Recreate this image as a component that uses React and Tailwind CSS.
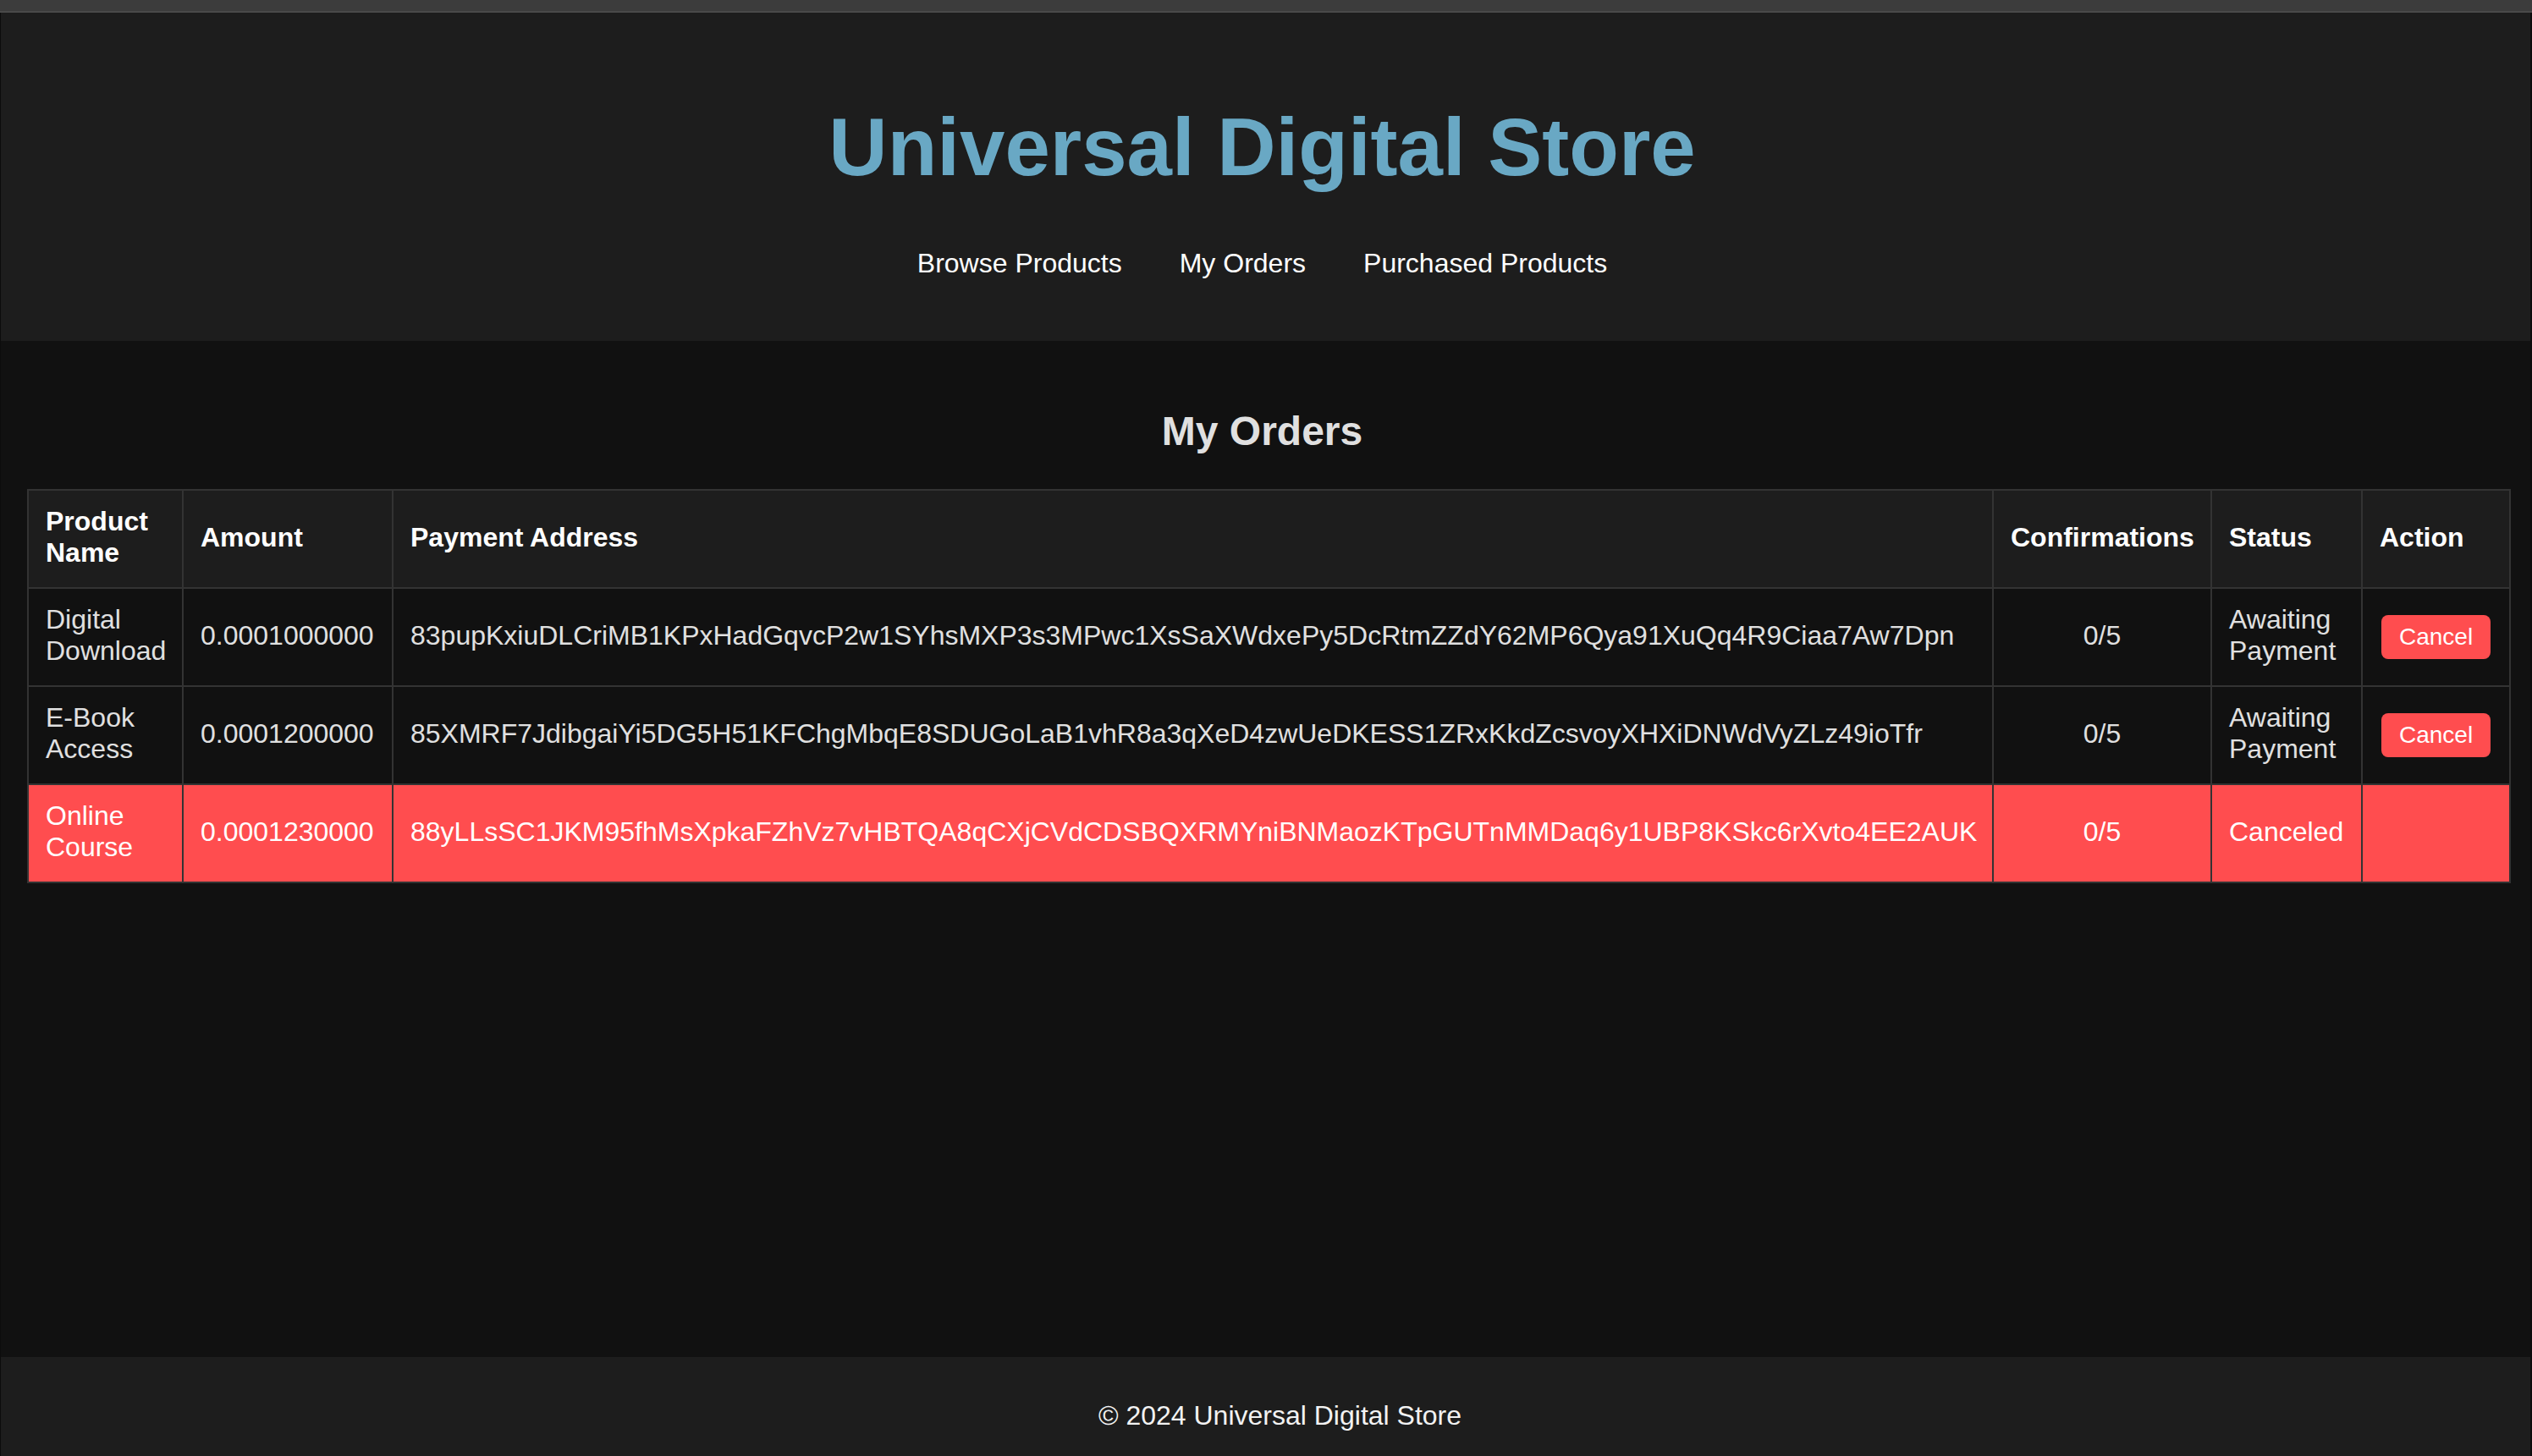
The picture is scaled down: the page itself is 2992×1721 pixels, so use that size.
import React from "react";

const orders = [
  {
    name: ["Digital", "Download"],
    amount: "0.0001000000",
    address:
      "83pupKxiuDLCriMB1KPxHadGqvcP2w1SYhsMXP3s3MPwc1XsSaXWdxePy5DcRtmZZdY62MP6Qya91XuQq4R9Ciaa7Aw7Dpn",
    conf: "0/5",
    status: ["Awaiting", "Payment"],
    canceled: false,
  },
  {
    name: ["E-Book", "Access"],
    amount: "0.0001200000",
    address:
      "85XMRF7JdibgaiYi5DG5H51KFChgMbqE8SDUGoLaB1vhR8a3qXeD4zwUeDKESS1ZRxKkdZcsvoyXHXiDNWdVyZLz49ioTfr",
    conf: "0/5",
    status: ["Awaiting", "Payment"],
    canceled: false,
  },
  {
    name: ["Online", "Course"],
    amount: "0.0001230000",
    address:
      "88yLLsSC1JKM95fhMsXpkaFZhVz7vHBTQA8qCXjCVdCDSBQXRMYniBNMaozKTpGUTnMMDaq6y1UBP8KSkc6rXvto4EE2AUK",
    conf: "0/5",
    status: ["Canceled"],
    canceled: true,
  },
];

const cell = "border-2 border-[#333333] px-[20px] pt-[18px] pb-[22px] align-middle";

export default function App() {
  return (
    <div className="font-['Liberation_Sans',Arial,sans-serif] bg-[#111111] min-h-[1721px]">
      <div className="h-[13px] bg-[#3c3c3c]" />
      <div className="h-[2px] bg-[#4a4a4a]" />
      <div className="border-l-[1px] border-r-[2px] border-[#0c0c0c]">
        <header className="h-[388px] bg-[#1d1d1d] flex flex-col items-center pt-[104px] pr-[8px]">
          <h1 className="text-[96px] leading-[110px] font-bold text-[#69a8c4] whitespace-nowrap">
            Universal Digital Store
          </h1>
          <nav className="mt-[64px] flex gap-[68px] text-[32px] leading-[37px] text-white whitespace-nowrap">
            <a>Browse Products</a>
            <a>My Orders</a>
            <a>Purchased Products</a>
          </nav>
        </header>
        <main className="h-[1201px] bg-[#111111] pt-[79px] pl-[31px] pr-[23px]">
          <h2 className="text-[48px] leading-[55px] font-bold text-[#e0e0e0] text-center pr-[16px] mb-[41px]">
            My Orders
          </h2>
          <table className="w-full table-fixed border-collapse text-[32px] leading-[37px]">
            <colgroup>
              <col className="w-[183px]" />
              <col className="w-[248px]" />
              <col />
              <col className="w-[258px]" />
              <col className="w-[178px]" />
              <col className="w-[175px]" />
            </colgroup>
            <thead>
              <tr className="bg-[#1d1d1d] text-white font-bold">
                <th className={cell + " text-left font-bold"}>
                  Product
                  <br />
                  Name
                </th>
                <th className={cell + " text-left font-bold"}>Amount</th>
                <th className={cell + " text-left font-bold"}>Payment Address</th>
                <th className={cell + " text-left font-bold whitespace-nowrap"}>
                  Confirmations
                </th>
                <th className={cell + " text-left font-bold"}>Status</th>
                <th className={cell + " text-left font-bold"}>Action</th>
              </tr>
            </thead>
            <tbody>
              {orders.map((o, i) => (
                <tr
                  key={i}
                  className={
                    o.canceled
                      ? "bg-[#ff4d4f] text-white"
                      : "bg-[#111111] text-[#e0e0e0]"
                  }
                >
                  <td className={cell}>
                    {o.name[0]}
                    <br />
                    {o.name[1]}
                  </td>
                  <td className={cell + " whitespace-nowrap"}>{o.amount}</td>
                  <td className={cell + " whitespace-nowrap"}>{o.address}</td>
                  <td className={cell + " text-center"}>{o.conf}</td>
                  <td className={cell}>
                    {o.status.map((s, j) => (
                      <div key={j}>{s}</div>
                    ))}
                  </td>
                  <td className="border-2 border-[#333333] px-[20px] py-[20px] align-middle">
                    {!o.canceled && (
                      <button className="ml-[2px] bg-[#ff4d4f] text-white text-[28px] leading-[32px] px-[21px] py-[10px] rounded-[8px]">
                        Cancel
                      </button>
                    )}
                  </td>
                </tr>
              ))}
            </tbody>
          </table>
        </main>
        <footer className="h-[117px] bg-[#1d1d1d] pt-[51px] pl-[34px] text-center text-[32px] leading-[37px] text-[#f2f2f2]">
          © 2024 Universal Digital Store
        </footer>
      </div>
    </div>
  );
}
